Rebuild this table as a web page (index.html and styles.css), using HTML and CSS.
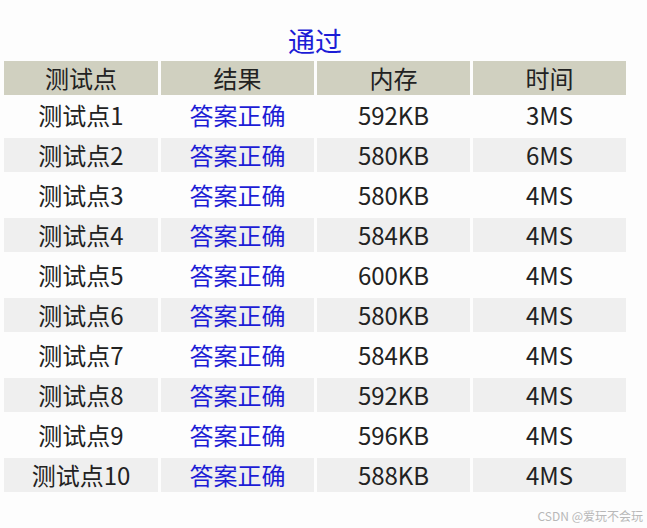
FILE: index.html
```html
<!DOCTYPE html>
<html lang="zh">
<head>
<meta charset="utf-8">
<link rel="stylesheet" href="styles.css">
</head>
<body>
<div class="page">
  <div class="title">通过</div>
  <div class="table">
    <div class="row head"><div>测试点</div><div>结果</div><div>内存</div><div>时间</div></div>
    <div class="row"><div>测试点1</div><div class="ok">答案正确</div><div>592KB</div><div>3MS</div></div>
    <div class="row alt"><div>测试点2</div><div class="ok">答案正确</div><div>580KB</div><div>6MS</div></div>
    <div class="row"><div>测试点3</div><div class="ok">答案正确</div><div>580KB</div><div>4MS</div></div>
    <div class="row alt"><div>测试点4</div><div class="ok">答案正确</div><div>584KB</div><div>4MS</div></div>
    <div class="row"><div>测试点5</div><div class="ok">答案正确</div><div>600KB</div><div>4MS</div></div>
    <div class="row alt"><div>测试点6</div><div class="ok">答案正确</div><div>580KB</div><div>4MS</div></div>
    <div class="row"><div>测试点7</div><div class="ok">答案正确</div><div>584KB</div><div>4MS</div></div>
    <div class="row alt"><div>测试点8</div><div class="ok">答案正确</div><div>592KB</div><div>4MS</div></div>
    <div class="row"><div>测试点9</div><div class="ok">答案正确</div><div>596KB</div><div>4MS</div></div>
    <div class="row alt"><div>测试点10</div><div class="ok">答案正确</div><div>588KB</div><div>4MS</div></div>
  </div>
  <div class="mark">CSDN @爱玩不会玩</div>
</div>
</body>
</html>
```
FILE: styles.css
```css
html, body {
  margin: 0;
  padding: 0;
  background: #fdfdfd;
}
body {
  font-family: "Noto Sans CJK SC", "Noto Sans", sans-serif;
  color: #222;
  width: 647px;
  height: 528px;
  overflow: hidden;
}
.page {
  position: relative;
  width: 647px;
  height: 528px;
  padding: 24px 0 0 4px;
  box-sizing: border-box;
}
.title {
  width: 622px;
  text-align: center;
  color: #1c1cd6;
  font-size: 27px;
  line-height: 34px;
  height: 37px;
}
.table {
  width: 622px;
  display: flex;
  flex-direction: column;
  gap: 6px;
}
.row {
  display: grid;
  grid-template-columns: 154px 153px 153px 153px;
  column-gap: 3px;
  height: 34px;
}
.row > div {
  text-align: center;
  font-size: 24px;
  line-height: 34px;
  white-space: nowrap;
}
.row.head {
  margin-bottom: -3px;
}
.row.head > div {
  background: #d0d0c0;
}
.row.alt > div {
  background: #efefef;
}
.row > div.ok {
  color: #1c1cd6;
}
.mark {
  position: absolute;
  right: 4px;
  bottom: 4px;
  font-size: 12px;
  color: #b8b8b8;
}
```
